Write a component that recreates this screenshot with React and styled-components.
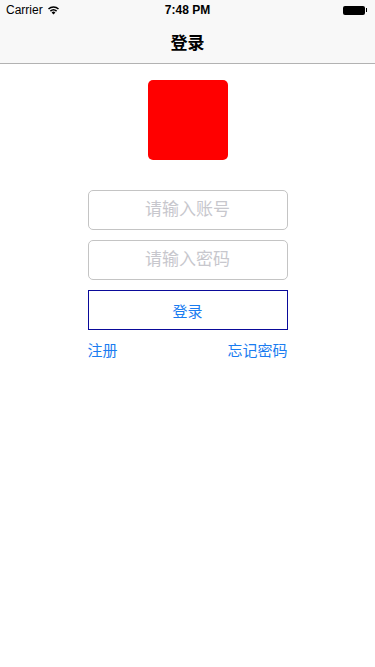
import styled, { createGlobalStyle } from 'styled-components';

const GlobalStyle = createGlobalStyle`
  html, body {
    margin: 0;
    padding: 0;
    background: #fff;
    font-family: "Liberation Sans", "Noto Sans CJK SC", sans-serif;
  }
`

const Page = styled.div`
  width: 375px;
  min-height: 667px;
  background: #fff;
`

const Header = styled.header`
  background: #f8f8f8;
  border-bottom: 1px solid #b2b2b2;
`

const StatusBar = styled.div`
  height: 20px;
  display: grid;
  grid-template-columns: 1fr auto 1fr;
  align-items: center;
  padding: 0 6px;
  font-size: 12px;
  color: #000;
`

const Carrier = styled.div`
  display: flex;
  align-items: center;
  gap: 4px;
`

const Time = styled.div`
  font-weight: 700;
`

const Battery = styled.div`
  justify-self: end;
  display: flex;
  align-items: center;
  margin-right: 2px;
`

const BatteryBody = styled.div`
  width: 22px;
  height: 9px;
  background: #000;
  border-radius: 2px;
`

const BatteryTip = styled.div`
  width: 1.5px;
  height: 4px;
  background: #000;
  margin-left: 1px;
`

const NavBar = styled.div`
  height: 43px;
  display: flex;
  align-items: center;
  justify-content: center;
  font-size: 17px;
  font-weight: 600;
  color: #000;
`

const Form = styled.div`
  width: 200px;
  margin: 0 auto;
  padding-top: 16px;
  display: flex;
  flex-direction: column;
  align-items: stretch;
`

const Logo = styled.div`
  width: 80px;
  height: 80px;
  background: #ff0000;
  border-radius: 5px;
  align-self: center;
  margin-bottom: 30px;
`

const Field = styled.input`
  box-sizing: border-box;
  height: 40px;
  width: 100%;
  border: 1px solid #c4c4c4;
  border-radius: 5px;
  margin: 0 0 ${p => p.$gap}px;
  text-align: center;
  font-size: 17px;
  font-family: inherit;
  outline: none;
  &::placeholder {
    color: #c7c7cd;
  }
`

const LoginButton = styled.button`
  box-sizing: border-box;
  height: 40px;
  width: 100%;
  border: 1px solid #0a0a9a;
  background: #fff;
  color: #1a7cf0;
  font-size: 15px;
  font-family: inherit;
  padding: 0;
`

const Links = styled.div`
  display: flex;
  justify-content: space-between;
  margin-top: 10px;
  font-size: 15px;
  line-height: 22px;
  color: #1a7cf0;
`

function Wifi() {
  return (
    <svg width="13" height="10" viewBox="0 0 13 10">
      <path d="M6.5 9.5 L4.6 7.4 A2.8 2.8 0 0 1 8.4 7.4 Z" fill="#000" />
      <path d="M3.4 6.1 A4.6 4.6 0 0 1 9.6 6.1" stroke="#000" strokeWidth="1.5" fill="none" />
      <path d="M1.5 4 A7.3 7.3 0 0 1 11.5 4" stroke="#000" strokeWidth="1.5" fill="none" />
    </svg>
  )
}

export default function App() {
  return (
    <Page>
      <GlobalStyle />
      <Header>
        <StatusBar>
          <Carrier>Carrier <Wifi /></Carrier>
          <Time>7:48 PM</Time>
          <Battery>
            <BatteryBody />
            <BatteryTip />
          </Battery>
        </StatusBar>
        <NavBar>登录</NavBar>
      </Header>
      <Form>
        <Logo />
        <Field $gap={10} placeholder="请输入账号" />
        <Field $gap={10} placeholder="请输入密码" type="password" />
        <LoginButton>登录</LoginButton>
        <Links>
          <span>注册</span>
          <span>忘记密码</span>
        </Links>
      </Form>
    </Page>
  )
}
